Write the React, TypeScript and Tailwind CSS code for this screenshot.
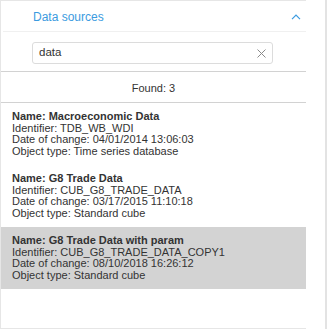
const items = [
  {
    name: "Macroeconomic Data",
    id: "TDB_WB_WDI",
    date: "04/01/2014 13:06:03",
    type: "Time series database",
    active: false,
  },
  {
    name: "G8 Trade Data",
    id: "CUB_G8_TRADE_DATA",
    date: "03/17/2015 11:10:18",
    type: "Standard cube",
    active: false,
  },
  {
    name: "G8 Trade Data with param",
    id: "CUB_G8_TRADE_DATA_COPY1",
    date: "08/10/2018 16:26:12",
    type: "Standard cube",
    active: true,
  },
];

export default function App() {
  return (
    <div className="w-[327px] h-[329px] bg-white flex border-r-2 border-[#e3e3e3] font-['Liberation_Sans',Arial,sans-serif] text-[#333]">
      <div className="w-[306px] h-full flex flex-col border-l border-t border-b border-[#e6e6e6]">
        {/* Header */}
        <div className="ml-[2px] h-[31px] shrink-0 flex items-center justify-between pl-[30px] pr-[4px] pt-[1px] border-b border-[#f0f0f0]">
          <span className="text-[12px] text-[#3b9be0]">Data sources</span>
          <svg width="10" height="6" viewBox="0 0 10 6" className="mr-[1px]">
            <path d="M1 5.2 L5 1.2 L9 5.2" fill="none" stroke="#3b9be0" strokeWidth="1.2" />
          </svg>
        </div>

        {/* Search */}
        <div className="h-[40px] shrink-0 pt-[10px] pl-[31px] border-b border-[#d2d2d2]">
          <div className="w-[241px] h-[22px] border border-[#dcdcdc] rounded-[3px] flex items-center justify-between pl-[6px] pr-[6px]">
            <span className="text-[11.5px] leading-none">data</span>
            <svg width="9" height="9" viewBox="0 0 9 9">
              <path d="M0.5 0.5 L8.5 8.5 M8.5 0.5 L0.5 8.5" stroke="#8a8a8a" strokeWidth="1" />
            </svg>
          </div>
        </div>

        {/* Count */}
        <div className="h-[31px] shrink-0 flex items-center justify-center pt-[3px] border-b border-[#d2d2d2]">
          <span className="text-[11px]">Found: 3</span>
        </div>

        {/* Results */}
        <div className="flex flex-col">
          {items.map((item) => (
            <div
              key={item.id}
              className={
                item.active
                  ? "h-[62px] py-2 pl-[11px] text-[11px] leading-[11.6px] bg-[#d3d3d3]"
                  : "h-[62px] py-2 pl-[11px] text-[11px] leading-[11.6px]"
              }
            >
              <div className="font-bold">Name: {item.name}</div>
              <div>Identifier: {item.id}</div>
              <div>Date of change: {item.date}</div>
              <div>Object type: {item.type}</div>
            </div>
          ))}
        </div>
      </div>
    </div>
  );
}
